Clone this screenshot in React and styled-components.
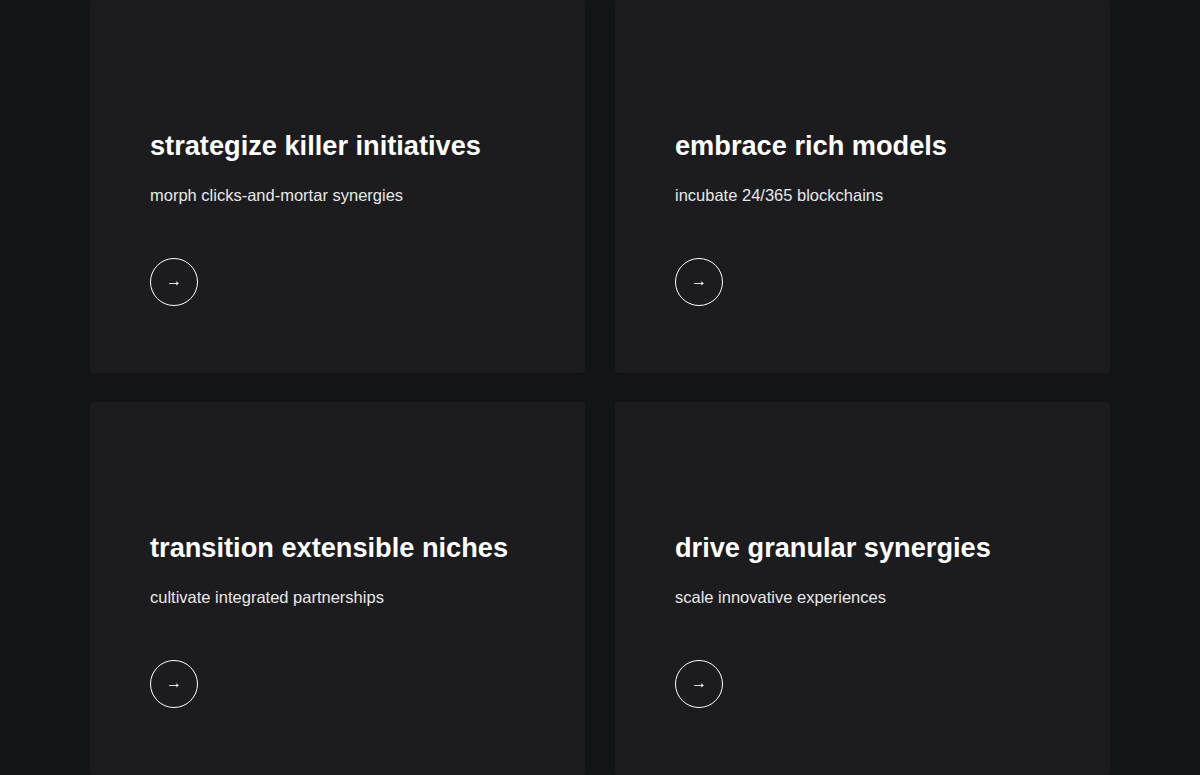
import styled, { createGlobalStyle } from "styled-components";

const GlobalStyle = createGlobalStyle`
	body {
		margin: 0;
		background-color: #131416;
		font-family: "Liberation Sans", Arial, sans-serif;
		color: #ffffff;
	}
`;

const Container = styled.div`
	padding: 0 90px;
	display: grid;
	grid-template-columns: 1fr 1fr;
	gap: 29.5px 30px;
`;

const Card = styled.div`
	height: 372.5px;
	box-sizing: border-box;
	padding: 128.5px 60px 0 60px;
	background-color: #1c1c1e;
	border-radius: 3px;
	display: flex;
	flex-direction: column;
	align-items: flex-start;
`;

const Title = styled.h2`
	margin: 0;
	font-size: 27.2px;
	line-height: 34px;
	font-weight: 700;
	color: #ffffff;
`;

const Text = styled.p`
	margin: 23.5px 0 0 0;
	font-size: 16.5px;
	line-height: 19px;
	color: #e8e8e8;
`;

const ArrowButton = styled.button`
	margin-top: 53px;
	width: 48px;
	height: 48px;
	border-radius: 50%;
	border: 1px solid #ffffff;
	background: transparent;
	color: #ffffff;
	font-family: "Liberation Sans", Arial, sans-serif;
	font-size: 16px;
	line-height: 1;
	display: flex;
	align-items: center;
	justify-content: center;
	padding: 0 0 3px 0;
	cursor: pointer;
`;

const items = [
	{ title: "strategize killer initiatives", text: "morph clicks-and-mortar synergies" },
	{ title: "embrace rich models", text: "incubate 24/365 blockchains" },
	{ title: "transition extensible niches", text: "cultivate integrated partnerships" },
	{ title: "drive granular synergies", text: "scale innovative experiences" },
];

const App = () => {
	return (
		<>
			<GlobalStyle />
			<Container>
				{items.map((item) => (
					<Card key={item.title}>
						<Title>{item.title}</Title>
						<Text>{item.text}</Text>
						<ArrowButton>→</ArrowButton>
					</Card>
				))}
			</Container>
		</>
	);
};

export default App;
